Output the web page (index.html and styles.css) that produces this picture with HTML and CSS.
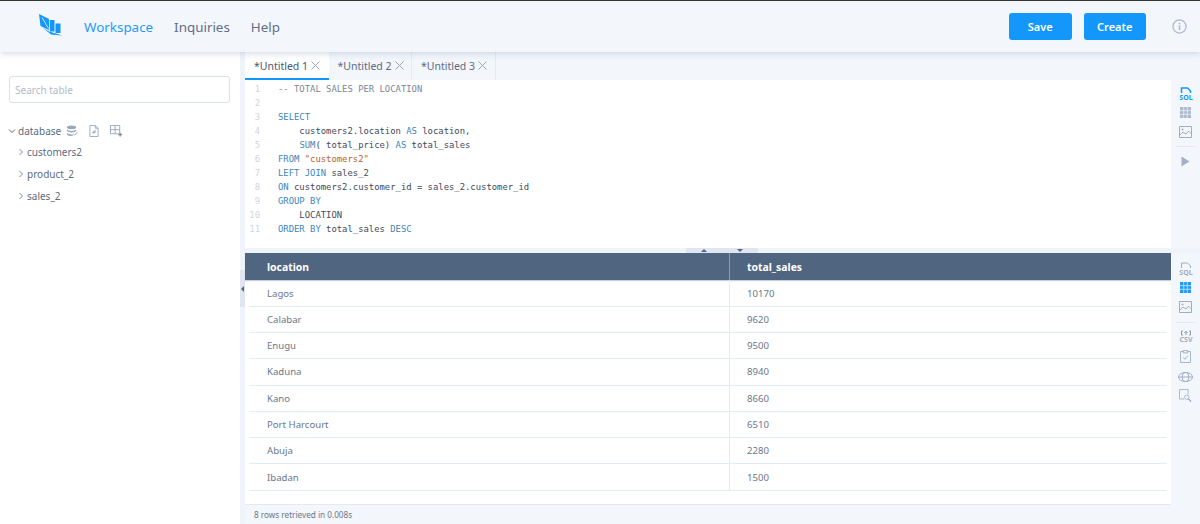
FILE: index.html
```html
<!DOCTYPE html>
<html lang="en">
<head>
<meta charset="utf-8">
<title>Workspace</title>
<link rel="stylesheet" href="styles.css">
</head>
<body>
<div class="app">
  <header class="topbar">
    <svg class="logo" width="24" height="24" viewBox="0 0 24 24"><path d="M0 1L10 6V17L1.500 13z" fill="#1497fb"/><path d="M3 4.500l6.500 11" stroke="#f3f6fb" stroke-width=".8"/><path d="M10.800 7h4.700v11.500h-4.700z" fill="#1497fb"/><path d="M16.500 10.500h5v9.500h-5z" fill="#1497fb"/><path d="M3 14L10 18.500l13.500 4L12 21.500z" fill="#1497fb"/></svg>
    <nav class="nav">
      <a class="nav-link is-active">Workspace</a>
      <a class="nav-link">Inquiries</a>
      <a class="nav-link">Help</a>
    </nav>
    <div class="actions">
      <button class="btn">Save</button>
      <button class="btn">Create</button>
      <svg class="info" width="15" height="15" viewBox="0 0 16 16"><circle cx="8" cy="8" r="7" fill="none" stroke="#aab6ca" stroke-width="1.3"/><rect x="7.2" y="6.8" width="1.6" height="5" fill="#aab6ca"/><rect x="7.2" y="4" width="1.6" height="1.7" fill="#aab6ca"/></svg>
    </div>
  </header>

  <div class="body">
    <aside class="sidebar">
      <input class="search" placeholder="Search table">
      <div class="tree-root">
        <svg class="chev" width="8" height="8" viewBox="0 0 8 8"><path d="M1 2.500l3 3 3-3" fill="none" stroke="#5d6b82" stroke-width="1"/></svg>
        <span>database</span>
        <svg class="db-icon" width="12" height="12" viewBox="0 0 13 13"><ellipse cx="6" cy="2.500" rx="5" ry="2" fill="#9aa7bd"/><path d="M1 5c2 2 8 2 10 0v1.600c-2 2-8 2-10 0zM1 8.500c2 2 5 2 6 1.500l1 1.500c-2 1-5 .5-7-1.200z" fill="#9aa7bd"/><path d="M8 9.500l1.500 1.500 3-3.500" fill="none" stroke="#9aa7bd" stroke-width="1"/></svg>
        <svg class="file-icon" width="10" height="12" viewBox="0 0 11 13"><path d="M1 .5h6l3 3v9H1z" fill="none" stroke="#9aa7bd"/><path d="M7 .5v3h3" fill="none" stroke="#9aa7bd"/><path d="M3.500 9l3-3v2.500H4.500" fill="none" stroke="#7f8ea8"/></svg>
        <svg class="table-icon" width="13" height="12" viewBox="0 0 14 13"><path d="M.5.500h10v9H.5zM.5 5h10M5.500.5v9" fill="none" stroke="#9aa7bd"/><path d="M11 8.500v4M9 10.500h4" stroke="#7f8ea8" stroke-width="1.400"/></svg>
      </div>
      <ul class="tree">
        <li class="tree-item"><svg width="8" height="8" viewBox="0 0 8 8"><path d="M2.500 1l3 3-3 3" fill="none" stroke="#7f8ba0"/></svg>customers2</li>
        <li class="tree-item"><svg width="8" height="8" viewBox="0 0 8 8"><path d="M2.500 1l3 3-3 3" fill="none" stroke="#7f8ba0"/></svg>product_2</li>
        <li class="tree-item"><svg width="8" height="8" viewBox="0 0 8 8"><path d="M2.500 1l3 3-3 3" fill="none" stroke="#7f8ba0"/></svg>sales_2</li>
      </ul>
    </aside>

    <div class="splitter"><span class="collapse"></span></div>

    <main class="main">
      <div class="tabs">
        <div class="tab is-active">*Untitled 1<svg width="9" height="9" viewBox="0 0 9 9"><path d="M.5.500l8 8M8.500.5l-8 8" stroke="#9aa5b8"/></svg></div>
        <div class="tab">*Untitled 2<svg width="9" height="9" viewBox="0 0 9 9"><path d="M.5.500l8 8M8.500.5l-8 8" stroke="#9aa5b8"/></svg></div>
        <div class="tab">*Untitled 3<svg width="9" height="9" viewBox="0 0 9 9"><path d="M.5.500l8 8M8.500.5l-8 8" stroke="#9aa5b8"/></svg></div>
      </div>
      <div class="top-pane">
        <div class="editor">
          <div class="gutter"><span>1</span><span>2</span><span>3</span><span>4</span><span>5</span><span>6</span><span>7</span><span>8</span><span>9</span><span>10</span><span>11</span></div>
<pre class="code"><span class="cm">-- TOTAL SALES PER LOCATION</span>

<span class="kw">SELECT</span>
    customers2.location <span class="kw">AS</span> location,
    <span class="kw">SUM</span>( total_price) <span class="kw">AS</span> total_sales
<span class="kw">FROM</span> <span class="str">"customers2"</span>
<span class="kw">LEFT JOIN</span> sales_2
<span class="kw">ON</span> customers2.customer_id = sales_2.customer_id
<span class="kw">GROUP BY</span>
    LOCATION
<span class="kw">ORDER BY</span> total_sales <span class="kw">DESC</span></pre>
        </div>
        <div class="rail rail-top">
          <svg class="ri gap-7" width="20" height="13" viewBox="0 0 20 13"><path d="M5.500 6V1h6l3 3v2" fill="none" stroke="#1497fb" stroke-width="1.500"/><text x="10" y="12.500" text-anchor="middle" class="ri-text is-on">SQL</text></svg>
          <svg class="ri gap-8" width="11" height="11" viewBox="0 0 14 14"><path d="M0 0h14v14H0z" fill="#aeb9cd"/><path d="M0 4.700h14M0 9.300h14M4.700 0v14M9.300 0v14" fill="none" stroke="#f3f6fb" stroke-width=".9"/></svg>
          <svg class="ri" width="13" height="12" viewBox="0 0 13 12"><path d="M.5.500h12v11H.5z" fill="none" stroke="#a0adc3"/><path d="M1 9l3-3 3 2 2.500-3 3 3" fill="none" stroke="#a0adc3"/><circle cx="3.500" cy="3.500" r="1" fill="#a0adc3"/></svg>
          <span class="rail-sep rail-sep-top"></span>
          <svg class="ri" width="9" height="11" viewBox="0 0 9 11"><path d="M.5.500l8 5-8 5z" fill="#a4b0c5"/></svg>
        </div>
      </div>

      <div class="divider"><span class="handle"><i class="up"></i></span><span class="handle"><i class="down"></i></span></div>

      <div class="bottom-pane">
        <div class="results">
          <div class="thead"><div class="th">location</div><div class="th">total_sales</div></div>
          <div class="tbody">
            <div class="tr"><div class="td">Lagos</div><div class="td">10170</div></div>
            <div class="tr"><div class="td">Calabar</div><div class="td">9620</div></div>
            <div class="tr"><div class="td">Enugu</div><div class="td">9500</div></div>
            <div class="tr"><div class="td">Kaduna</div><div class="td">8940</div></div>
            <div class="tr"><div class="td">Kano</div><div class="td">8660</div></div>
            <div class="tr"><div class="td">Port Harcourt</div><div class="td">6510</div></div>
            <div class="tr"><div class="td">Abuja</div><div class="td">2280</div></div>
            <div class="tr"><div class="td">Ibadan</div><div class="td">1500</div></div>
          </div>
          <div class="status">8 rows retrieved in 0.008s</div>
        </div>
        <div class="rail rail-bottom">
          <svg class="ri gap-6" width="20" height="14" viewBox="0 0 20 14"><path d="M5.500 6V1h6l3 3v2" fill="none" stroke="#a0adc3"/><text x="10" y="13" text-anchor="middle" class="ri-text">SQL</text></svg>
          <svg class="ri gap-8" width="11" height="11" viewBox="0 0 14 14"><path d="M0 0h14v14H0z" fill="#1f9bfb"/><path d="M0 4.700h14M0 9.300h14M4.700 0v14M9.300 0v14" fill="none" stroke="#dff0fe" stroke-width=".9"/></svg>
          <svg class="ri" width="13" height="12" viewBox="0 0 13 12"><path d="M.5.500h12v11H.5z" fill="none" stroke="#a0adc3"/><path d="M1 9l3-3 3 2 2.500-3 3 3" fill="none" stroke="#a0adc3"/><circle cx="3.500" cy="3.500" r="1" fill="#a0adc3"/></svg>
          <span class="rail-sep rail-sep-bottom"></span>
          <svg class="ri gap-6" width="20" height="14" viewBox="0 0 20 14"><path d="M5.500 5V1H7M14.500 5V1H13M5.500 5H7M14.500 5H13M10 5V1.500M8.300 3l1.700-1.700L11.700 3" fill="none" stroke="#8c9ab2"/><text x="10" y="12" text-anchor="middle" class="ri-text">CSV</text></svg>
          <svg class="ri gap-9" width="11" height="13" viewBox="0 0 12 14"><path d="M3.500 1.500H.5v12h11v-12h-3M3.500.5h5V3h-5z" fill="none" stroke="#a0adc3"/><path d="M3.500 8l2 2 3-4" fill="none" stroke="#a0adc3"/></svg>
          <svg class="ri gap-7" width="15" height="10" viewBox="0 0 15 10"><ellipse cx="7.500" cy="5" rx="7" ry="4.500" fill="none" stroke="#a0adc3"/><ellipse cx="7.500" cy="5" rx="3.200" ry="4.500" fill="none" stroke="#a0adc3"/><path d="M.5 5h14" stroke="#a0adc3"/></svg>
          <svg class="ri" width="13" height="13" viewBox="0 0 15 15"><path d="M6 11.500H.5v-11h10V6" fill="none" stroke="#a0adc3"/><circle cx="9" cy="9.500" r="2.500" fill="none" stroke="#a0adc3"/><path d="M11 11.500l3 3" stroke="#8c9ab2" stroke-width="1.300"/></svg>
        </div>
      </div>
    </main>
  </div>
</div>
</body>
</html>
```
FILE: styles.css
```css
* { box-sizing: border-box; }
html, body { margin: 0; height: 100%; overflow: hidden; }
body { font-family: "Noto Sans", sans-serif; color: #5d6b82; background: #fff; }

.app { width: 1200px; height: 524px; display: flex; flex-direction: column; }

.topbar {
  height: 52px; flex: none; display: flex; align-items: center;
  background: #f3f6fb; border-top: 1px solid #333;
  box-shadow: 0 2px 6px rgba(120, 140, 170, .28);
  position: relative; z-index: 2;
  padding: 0 13px 0 39px;
}
.logo { flex: none; margin: 0 21px 4px 0; }
.nav { display: flex; gap: 21px; }
.nav-link { font-size: 13.400px; color: #5f6f87; }
.nav-link.is-active { color: #1f9bfb; }
.actions { margin-left: auto; display: flex; align-items: center; }
.btn {
  width: 62.500px; height: 27px; margin-left: 12px; padding: 0;
  border: 0; border-radius: 3px; background: #1497fb; color: #fff;
  font: 600 11px "Noto Sans", sans-serif;
}
.info { margin-left: 26px; }

.body { flex: 1; min-height: 0; display: flex; }
.sidebar { width: 240px; flex: none; padding: 24px 9px 0; }
.search {
  display: block; width: 221px; height: 27px; padding: 0 5px;
  border: 1px solid #d9e1ee; border-radius: 3px; background: #fff;
  font: 10px "Noto Sans", sans-serif; color: #5d6b82;
}
.search::placeholder { color: #b2bacb; opacity: 1; }
.tree-root { display: flex; align-items: center; margin-top: 20px; height: 16px; font-size: 10px; margin-left: -1px; }
.tree-root .chev { margin-right: 2px; }
.db-icon { margin-left: 5px; }
.file-icon { margin-left: 11px; }
.table-icon { margin-left: 11px; }
.tree { list-style: none; margin: 2px 0 0; padding: 0 0 0 8px; }
.tree-item { height: 22px; display: flex; align-items: center; gap: 2px; font-size: 10px; }
.tree-item svg { flex: none; }

.splitter { width: 5px; flex: none; background: #eff3fa; display: flex; align-items: flex-start; }
.collapse {
  width: 5px; height: 37px; margin-top: 218px; background: #dfe6f1;
  display: flex; align-items: center; justify-content: center;
}
.collapse::before { content: ""; border: 3px solid transparent; border-left: 0; border-right: 3px solid #4f6580; }

.main { flex: 1; min-width: 0; display: flex; flex-direction: column; }
.tabs { height: 28px; flex: none; display: flex; background: #f3f6fb; }
.tab {
  width: 83.500px; height: 28px; display: flex; align-items: center; gap: 3px;
  padding: 1px 0 2px 9px; font-size: 10.500px; color: #5d6b82;
  border-right: 1px solid #e4e9f2;
}
.tab.is-active { background: #fff; color: #4a5870; border-bottom: 2px solid #1497fb; padding-bottom: 0; border-right: 0; }
.top-pane { height: 168px; flex: none; display: flex; }
.editor { flex: 1; min-width: 0; display: flex; background: #fff; padding-top: 2px; }
.gutter { width: 33px; flex: none; display: flex; flex-direction: column; padding-right: 18px; align-items: flex-end; font: 8.900px/14.050px "DejaVu Sans Mono", monospace; color: #d0d5df; }
.code { margin: 0; font: 8.900px/14.050px "DejaVu Sans Mono", monospace; color: #3f4a5c; }
.cm { color: #7b8595; }
.kw { color: #3d85bd; }
.str { color: #b5642a; }

.rail { width: 29px; flex: none; background: #f3f6fb; display: flex; flex-direction: column; align-items: center; }
.ri { flex: none; display: block; }
.ri-text { font: 700 7px "Noto Sans", sans-serif; fill: #a0adc3; }
.ri-text.is-on { fill: #1497fb; }
.gap-6 { margin-bottom: 6px; }
.gap-7 { margin-bottom: 7px; }
.gap-8 { margin-bottom: 8px; }
.gap-9 { margin-bottom: 9px; }
.rail-sep { width: 20px; height: 1px; background: #e4e9f2; flex: none; }
.rail-sep-top { margin: 8px 0 9px; }
.rail-sep-bottom { margin: 9px 0 7px; }
.rail-top { padding-top: 7px; }
.rail-bottom { padding-top: 9px; }

.divider { height: 5px; flex: none; background: #eff3fa; display: flex; padding-left: 441px; }
.handle { width: 36px; height: 5px; background: #dfe6f1; display: flex; justify-content: center; align-items: center; }
.up { border: 3px solid transparent; border-top: 0; border-bottom: 3px solid #4f6580; }
.down { border: 3px solid transparent; border-bottom: 0; border-top: 3px solid #4f6580; }

.bottom-pane { flex: 1; min-height: 0; display: flex; }
.results { flex: 1; min-width: 0; display: flex; flex-direction: column; }
.thead { height: 27px; flex: none; display: grid; grid-template-columns: 484px 1fr; background: #4f6580; box-shadow: 0 1px 1px #c9d1dd; }
.th { display: flex; align-items: center; padding-left: 22px; font-size: 10.400px; font-weight: 700; color: #fff; }
.th + .th { padding-left: 17px; border-left: 1px solid #8c9bb0; }
.tbody { flex: 1; padding: .4px 4px 0; }
.tr { height: 26.300px; display: grid; grid-template-columns: 480px 1fr; border-bottom: 1px solid #e5ebf4; }
.td { display: flex; align-items: center; padding-left: 18px; font-size: 9.600px; color: #6b778c; }
.td + .td { padding-left: 17px; border-left: 1px solid #e5ebf4; }
.status { height: 20px; flex: none; display: flex; align-items: center; padding-left: 9px; background: #f3f6fb; border-top: 1px solid #e4e9f2; font-size: 8.200px; color: #6b778c; }
```
